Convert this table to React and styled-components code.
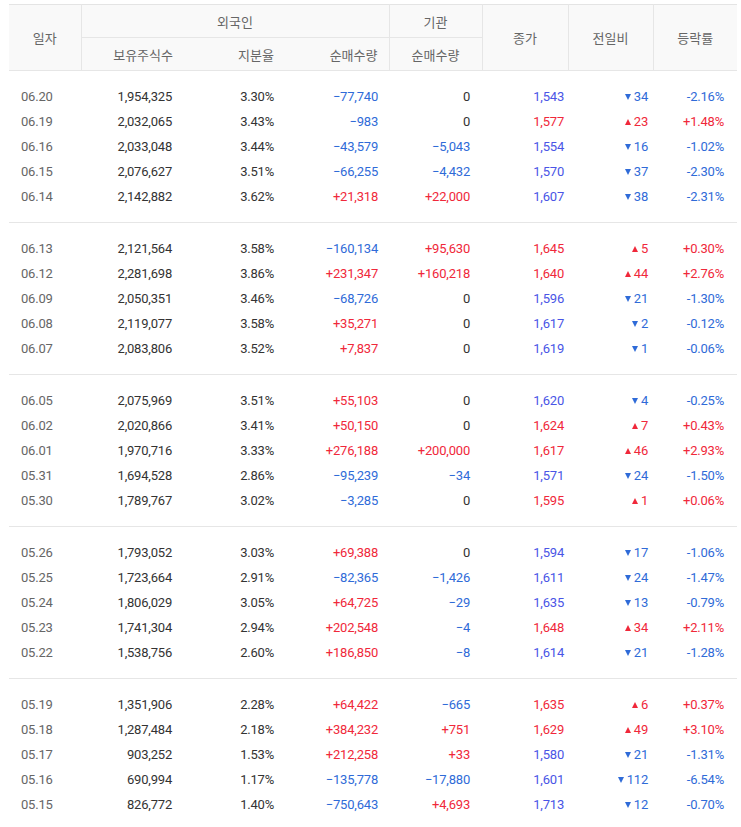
import React from 'react';
import styled, { createGlobalStyle } from 'styled-components';

const GlobalStyle = createGlobalStyle`
  body {
    margin: 0;
    background: #fff;
  }
`;

const groups = [
  [
    ['06.20', '1,954,325', '3.30%', '−77,740', '0', '1,543', -34, '-2.16%'],
    ['06.19', '2,032,065', '3.43%', '−983', '0', '1,577', 23, '+1.48%'],
    ['06.16', '2,033,048', '3.44%', '−43,579', '−5,043', '1,554', -16, '-1.02%'],
    ['06.15', '2,076,627', '3.51%', '−66,255', '−4,432', '1,570', -37, '-2.30%'],
    ['06.14', '2,142,882', '3.62%', '+21,318', '+22,000', '1,607', -38, '-2.31%'],
  ],
  [
    ['06.13', '2,121,564', '3.58%', '−160,134', '+95,630', '1,645', 5, '+0.30%'],
    ['06.12', '2,281,698', '3.86%', '+231,347', '+160,218', '1,640', 44, '+2.76%'],
    ['06.09', '2,050,351', '3.46%', '−68,726', '0', '1,596', -21, '-1.30%'],
    ['06.08', '2,119,077', '3.58%', '+35,271', '0', '1,617', -2, '-0.12%'],
    ['06.07', '2,083,806', '3.52%', '+7,837', '0', '1,619', -1, '-0.06%'],
  ],
  [
    ['06.05', '2,075,969', '3.51%', '+55,103', '0', '1,620', -4, '-0.25%'],
    ['06.02', '2,020,866', '3.41%', '+50,150', '0', '1,624', 7, '+0.43%'],
    ['06.01', '1,970,716', '3.33%', '+276,188', '+200,000', '1,617', 46, '+2.93%'],
    ['05.31', '1,694,528', '2.86%', '−95,239', '−34', '1,571', -24, '-1.50%'],
    ['05.30', '1,789,767', '3.02%', '−3,285', '0', '1,595', 1, '+0.06%'],
  ],
  [
    ['05.26', '1,793,052', '3.03%', '+69,388', '0', '1,594', -17, '-1.06%'],
    ['05.25', '1,723,664', '2.91%', '−82,365', '−1,426', '1,611', -24, '-1.47%'],
    ['05.24', '1,806,029', '3.05%', '+64,725', '−29', '1,635', -13, '-0.79%'],
    ['05.23', '1,741,304', '2.94%', '+202,548', '−4', '1,648', 34, '+2.11%'],
    ['05.22', '1,538,756', '2.60%', '+186,850', '−8', '1,614', -21, '-1.28%'],
  ],
  [
    ['05.19', '1,351,906', '2.28%', '+64,422', '−665', '1,635', 6, '+0.37%'],
    ['05.18', '1,287,484', '2.18%', '+384,232', '+751', '1,629', 49, '+3.10%'],
    ['05.17', '903,252', '1.53%', '+212,258', '+33', '1,580', -21, '-1.31%'],
    ['05.16', '690,994', '1.17%', '−135,778', '−17,880', '1,601', -112, '-6.54%'],
    ['05.15', '826,772', '1.40%', '−750,643', '+4,693', '1,713', -12, '-0.70%'],
  ],
];

const colors = {
  up: '#f0283a',
  down: '#2f6bd8',
  closeDown: '#4a55e6',
  plain: '#333',
};

const signTone = (v) => (v.startsWith('+') ? 'up' : v.startsWith('−') ? 'down' : 'plain');

const Page = styled.div`
  padding: 4px 4px 0 9px;
  font-family: Roboto, 'Noto Sans CJK KR', sans-serif;
`;

const Table = styled.table`
  width: 728px;
  border-collapse: collapse;
  table-layout: fixed;
  border-top: 1px solid #e4e4e4;
`;

const HeadCell = styled.th`
  height: 32px;
  padding: 0 ${(p) => p.$pr || 0}px 0 0;
  background: #f9f9f9;
  font-family: 'Noto Sans CJK KR', Roboto, sans-serif;
  font-weight: 400;
  font-size: 13px;
  color: #666;
  text-align: ${(p) => p.$align || 'center'};
  border-bottom: 1px solid #e6e6e6;
  border-left: ${(p) => (p.$line ? '1px solid #e6e6e6' : 'none')};
  vertical-align: middle;
`;

const Group = styled.tbody`
  border-bottom: 1px solid #e6e6e6;
  tr:first-child td {
    padding-top: 13px;
  }
  tr:last-child td {
    padding-bottom: 13px;
  }
`;

const Cell = styled.td`
  height: 25px;
  padding: 0 ${(p) => p.$pr || 0}px 0 ${(p) => p.$pl || 0}px;
  font-size: 13px;
  letter-spacing: -0.2px;
  text-align: ${(p) => p.$align || 'right'};
  color: ${(p) => colors[p.$tone] || p.$tone || colors.plain};
  white-space: nowrap;
  vertical-align: middle;
`;

const Arrow = styled.span`
  display: inline-block;
  width: 0;
  height: 0;
  margin-right: 3px;
  vertical-align: 1px;
  border-left: 3.5px solid transparent;
  border-right: 3.5px solid transparent;
  ${(p) =>
    p.$up
      ? `border-bottom: 6px solid ${colors.up};`
      : `border-top: 6px solid ${colors.down};`}
`;

const Row = ({ row }) => {
  const [date, held, ratio, foreign, inst, close, diff, rate] = row;
  const up = diff > 0;
  return (
    <tr>
      <Cell $align="left" $pl={12} $tone="#666">{date}</Cell>
      <Cell $pr={13}>{held}</Cell>
      <Cell $pr={13}>{ratio}</Cell>
      <Cell $pr={11} $tone={signTone(foreign)}>{foreign}</Cell>
      <Cell $pr={12} $tone={signTone(inst)}>{inst}</Cell>
      <Cell $pr={4} $tone={up ? 'up' : 'closeDown'}>{close}</Cell>
      <Cell $pr={5} $tone={up ? 'up' : 'down'}>
        <Arrow $up={up} />
        {Math.abs(diff)}
      </Cell>
      <Cell $pr={13} $tone={up ? 'up' : 'down'}>{rate}</Cell>
    </tr>
  );
};

export default function App() {
  return (
    <Page>
      <GlobalStyle />
      <Table>
        <colgroup>
          <col style={{ width: 72 }} />
          <col style={{ width: 104 }} />
          <col style={{ width: 102 }} />
          <col style={{ width: 102 }} />
          <col style={{ width: 93 }} />
          <col style={{ width: 86 }} />
          <col style={{ width: 85 }} />
          <col style={{ width: 84 }} />
        </colgroup>
        <thead>
          <tr>
            <HeadCell rowSpan={2}>일자</HeadCell>
            <HeadCell colSpan={3} $line>외국인</HeadCell>
            <HeadCell $line>기관</HeadCell>
            <HeadCell rowSpan={2} $line>종가</HeadCell>
            <HeadCell rowSpan={2} $line>전일비</HeadCell>
            <HeadCell rowSpan={2} $line>등락률</HeadCell>
          </tr>
          <tr>
            <HeadCell $line $align="right" $pr={12}>보유주식수</HeadCell>
            <HeadCell $align="right" $pr={13}>지분율</HeadCell>
            <HeadCell $align="right" $pr={11}>순매수량</HeadCell>
            <HeadCell $line>순매수량</HeadCell>
          </tr>
        </thead>
        {groups.map((g, i) => (
          <Group key={i}>
            {g.map((r) => (
              <Row key={r[0]} row={r} />
            ))}
          </Group>
        ))}
      </Table>
    </Page>
  );
}
